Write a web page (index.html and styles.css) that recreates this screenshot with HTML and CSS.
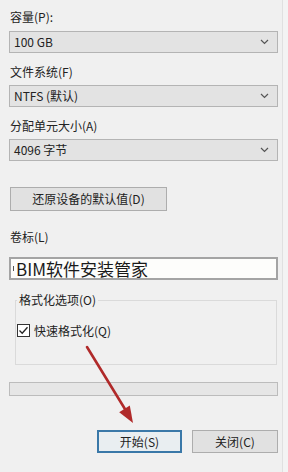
FILE: index.html
```html
<!DOCTYPE html>
<html lang="zh-CN">
<head>
<meta charset="utf-8">
<title>格式化</title>
<link rel="stylesheet" href="styles.css">
</head>
<body>
<div class="page">
  <div class="dialog">
    <div class="label first">容量(P):</div>
    <div class="combo"><span>100 GB</span><svg class="chev" width="9" height="6" viewBox="0 0 9 6"><polyline points="1,1 4.5,4.5 8,1" fill="none" stroke="#555" stroke-width="1.2"/></svg></div>
    <div class="label">文件系统(F)</div>
    <div class="combo"><span>NTFS (默认)</span><svg class="chev" width="9" height="6" viewBox="0 0 9 6"><polyline points="1,1 4.5,4.5 8,1" fill="none" stroke="#555" stroke-width="1.2"/></svg></div>
    <div class="label">分配单元大小(A)</div>
    <div class="combo"><span>4096 字节</span><svg class="chev" width="9" height="6" viewBox="0 0 9 6"><polyline points="1,1 4.5,4.5 8,1" fill="none" stroke="#555" stroke-width="1.2"/></svg></div>
    <div class="btn restore">还原设备的默认值(D)</div>
    <div class="label vol">卷标(L)</div>
    <div class="textbox"><span class="caret"></span>BIM软件安装管家</div>
    <div class="group">
      <span class="legend">格式化选项(O)</span>
      <div class="check-row">
        <svg class="checkbox" width="13" height="13" viewBox="0 0 13 13"><rect x="0.5" y="0.5" width="12" height="12" fill="#fff" stroke="#333"/><polyline points="2.5,6.5 5.2,9.2 10.5,3.2" fill="none" stroke="#222" stroke-width="1.3"/></svg>
        <span>快速格式化(Q)</span>
      </div>
    </div>
    <div class="progress"></div>
    <div class="buttons">
      <div class="btn start">开始(S)</div>
      <div class="btn close">关闭(C)</div>
    </div>
  </div>
  <svg class="arrow" width="288" height="472" viewBox="0 0 288 472">
    <line x1="87" y1="347" x2="128" y2="414" stroke="#b02a2a" stroke-width="2.6" stroke-linecap="round"/>
    <polygon points="133,423 129.8,405.6 119.2,412.2" fill="#b02a2a"/>
  </svg>
</div>
</body>
</html>
```
FILE: styles.css
```css
html, body {
  margin: 0;
  padding: 0;
  background: #f3f3f3;
}
.page {
  position: relative;
  width: 282px;
  height: 472px;
  background: #f0f0f0;
  border-right: 1px solid #e0e0e0;
  overflow: hidden;
  font-family: "Noto Sans CJK SC", "Noto Sans", sans-serif;
  font-size: 12px;
  color: #222;
}
.dialog {
  padding: 9px 0 0 9px;
  width: 269px;
}
.label {
  height: 16px;
  line-height: 16px;
  margin-top: 11px;
  padding-left: 1px;
}
.label.first { margin-top: 0; }
.label.vol { margin-top: 18px; }
.combo {
  margin-top: 6px;
  height: 22px;
  box-sizing: border-box;
  border: 1px solid #b4b4b4;
  background: #e3e3e3;
  display: flex;
  align-items: center;
  justify-content: space-between;
  padding: 0 8px 0 4px;
  line-height: 20px;
}
.label + .combo { margin-top: 5px; }
.label.first + .combo { margin-top: 6px; }
.chev { display: block; }
.btn {
  box-sizing: border-box;
  display: flex;
  align-items: center;
  justify-content: center;
  border: 1px solid #adadad;
  background: #e1e1e1;
  line-height: 20px;
}
.restore {
  margin-top: 26px;
  margin-left: 1px;
  width: 157px;
  height: 24px;
}
.textbox {
  margin-top: 12px;
  height: 23px;
  box-sizing: border-box;
  border: 2px solid #a4a4a4;
  background: #fdfdfb;
  font-size: 17px;
  line-height: 19px;
  padding-left: 2px;
  display: flex;
  align-items: center;
  color: #1a1a1a;
}
.caret {
  width: 1px;
  height: 5px;
  background: #555;
  margin-right: 2px;
}
.group {
  margin-top: 20px;
  margin-left: 6px;
  width: 262px;
  height: 65px;
  box-sizing: border-box;
  border: 1px solid #dadada;
  padding-left: 1px;
}
.legend {
  display: inline-block;
  margin-top: -9px;
  margin-left: 0;
  padding: 0 2px;
  background: #f0f0f0;
  height: 16px;
  line-height: 16px;
  vertical-align: top;
}
.check-row {
  margin-top: 6px;
  display: flex;
  align-items: center;
  gap: 4px;
  height: 13px;
  line-height: 13px;
}
.checkbox { display: block; }
.progress {
  margin-top: 17px;
  height: 14px;
  box-sizing: border-box;
  border: 1px solid #bcbcbc;
  background: #e6e6e6;
}
.buttons {
  margin-top: 34px;
  display: flex;
  justify-content: flex-end;
  gap: 10px;
}
.start {
  width: 85px;
  height: 23px;
  border: 2px solid #3a78a8;
  background: #e9eef1;
}
.close {
  width: 86px;
  height: 23px;
}
.arrow {
  position: absolute;
  left: 0;
  top: 0;
  pointer-events: none;
}
```
